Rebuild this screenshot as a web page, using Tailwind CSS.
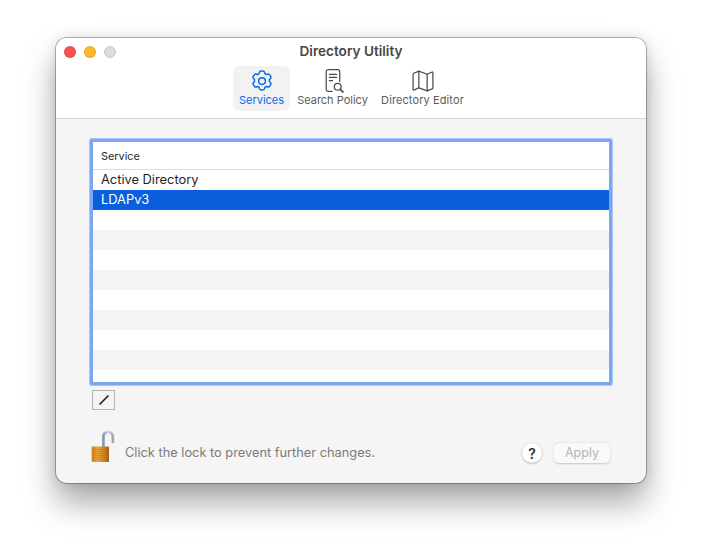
<!DOCTYPE html>
<html><head><meta charset="utf-8"><script src="https://cdn.jsdelivr.net/npm/@tailwindcss/browser@4"></script></head>
<body class="bg-white overflow-hidden font-['Inter','Liberation_Sans',sans-serif]">
<div class="w-[702px] h-[557px] pt-[38px] overflow-hidden">
<div class="mx-auto w-[590px] h-[445px] rounded-[11px] bg-[#f5f5f5] overflow-hidden flex flex-col shadow-[0_0_0_1px_rgba(0,0,0,0.28),0_20px_32px_rgba(0,0,0,0.34),0_0_14px_rgba(0,0,0,0.12)]">
  <header class="relative h-[81px] bg-white border-b border-[#d4d4d4] shrink-0">
    <div class="absolute left-[8px] top-[8px] flex gap-[8px]">
      <span class="w-3 h-3 rounded-full bg-[#fc5053] border border-[#e0443e]/70"></span>
      <span class="w-3 h-3 rounded-full bg-[#fdb82c] border border-[#dea123]/70"></span>
      <span class="w-3 h-3 rounded-full bg-[#dcdcdc] border border-[#c8c8c8]"></span>
    </div>
    <div class="text-center pt-[5px] pb-[1px] text-[13.6px] leading-[16px] font-semibold text-[#474747]">Directory Utility</div>
    <nav class="flex items-start mt-[6px] text-[11px] leading-[14px] pl-[177px]">
      <div class="w-[57px] h-[45px] rounded-md bg-[#f2f2f2] flex flex-col items-center pt-[2px] text-[#0a68ea]">
        <svg class="-my-[1px]" width="28" height="27" viewBox="0 0 24 24" fill="none" stroke="currentColor" stroke-width="1.300" stroke-linecap="round" stroke-linejoin="round"><path d="M9.600 3.600c.1-.9.900-1.600 1.800-1.600h1.200c.9 0 1.700.7 1.800 1.600l.1.800c.5.2 1 .5 1.500.8l.8-.3c.8-.3 1.800 0 2.200.8l.6 1c.5.800.3 1.800-.4 2.400l-.6.500c.1.600.1 1.200 0 1.800l.6.500c.7.600.9 1.600.4 2.400l-.6 1c-.4.800-1.400 1.100-2.200.8l-.8-.3c-.5.300-1 .6-1.500.8l-.1.800c-.1.900-.9 1.600-1.800 1.600h-1.200c-.9 0-1.700-.7-1.800-1.600l-.1-.8c-.5-.2-1-.5-1.500-.8l-.8.300c-.8.300-1.800 0-2.200-.8l-.6-1c-.5-.8-.3-1.800.4-2.400l.6-.5c-.1-.6-.1-1.200 0-1.800l-.6-.5c-.7-.6-.9-1.600-.4-2.400l.6-1c.4-.8 1.400-1.100 2.200-.8l.8.3c.5-.3 1-.6 1.500-.8z" transform="translate(0 1.500)"/><circle cx="12" cy="12.500" r="3"/></svg>
        <span>Services</span>
      </div>
      <div class="w-[85px] h-[45px] flex flex-col items-center pt-[2px] text-[#5c5c5c]">
        <svg width="26" height="25" viewBox="0 0 24 24" fill="none" stroke="#4c4c4c" stroke-width="1.200" stroke-linecap="round" stroke-linejoin="round"><path d="M11 22.500H7.500c-1.100 0-2-.9-2-2V3.500c0-1.100.9-2 2-2h9c1.100 0 2 .9 2 2V13"/><path d="M8.500 6h7M8.500 9h7M8.500 12h3"/><circle cx="16.500" cy="18" r="3.300"/><path d="M19 20.500l2.500 2.500" stroke-width="1.700"/></svg>
        <span>Search Policy</span>
      </div>
      <div class="w-[95px] h-[45px] flex flex-col items-center pt-[2px] text-[#5c5c5c] tracking-[0.1px]">
        <svg width="26" height="25" viewBox="0 0 24 24" fill="none" stroke="#4c4c4c" stroke-width="1.200" stroke-linejoin="round" stroke-linecap="round"><path d="M2.500 6c0-.5.300-.8.700-1L8 3l8 3 4.700-2.200c.4-.2.800.1.800.6v14.600c0 .5-.3.800-.7 1L16 22l-8-3-4.700 2.200c-.4.200-.8-.1-.8-.6z"/><path d="M8 3v16M16 6v16"/></svg>
        <span>Directory Editor</span>
      </div>
    </nav>
  </header>
  <main class="flex-1 px-[34px] pt-[20px] flex flex-col">
    <section class="w-[522px] h-[246px] border-[3px] border-[#7aa7ef] ring-1 ring-[#7aa7ef]/60 rounded-[2px] bg-white flex flex-col">
      <div class="h-[28px] border-b border-[#dcdcdc] pl-[8px] pt-[6px] text-[10.9px] leading-[16px] text-[#2a2a2a] shrink-0">Service</div>
      <ul class="text-[12.85px] leading-[19px] text-[#1f1f1f]">
        <li class="h-5 pl-[8px]">Active Directory</li>
        <li class="h-5 pl-[8px] bg-[#0a5fdc] text-white">LDAPv3</li>
        <li class="h-5"></li>
        <li class="h-5 bg-[#f4f5f5]"></li>
        <li class="h-5"></li>
        <li class="h-5 bg-[#f4f5f5]"></li>
        <li class="h-5"></li>
        <li class="h-5 bg-[#f4f5f5]"></li>
        <li class="h-5"></li>
        <li class="h-5 bg-[#f4f5f5]"></li>
        <li class="h-5"></li>
      </ul>
    </section>
    <div class="ml-[2px] mt-[5px] w-[23px] h-[20px] border border-[#b4b4b4] flex items-center justify-center">
      <svg width="12" height="12" viewBox="0 0 12 12"><path d="M2 10L10 2" stroke="#222" stroke-width="1.700" stroke-linecap="round"/></svg>
    </div>
    <div class="relative mt-[20px] flex items-start h-[40px]">
      <svg width="26" height="34" viewBox="0 0 26 34">
        <defs>
          <linearGradient id="b" x1="0" x2="1" y1="0" y2="0"><stop offset="0" stop-color="#cf8120"/><stop offset=".35" stop-color="#eaa73f"/><stop offset=".8" stop-color="#c67a1c"/><stop offset="1" stop-color="#a05e14"/></linearGradient>
          <linearGradient id="s" x1="0" x2="1" y1="0" y2="0"><stop offset="0" stop-color="#8fa0b4"/><stop offset=".5" stop-color="#eef1f4"/><stop offset="1" stop-color="#a9b2bc"/></linearGradient>
        </defs>
        <path d="M13.500 17V7.500c0-3.200 1.800-5.500 4.500-5.500s4.800 2.300 4.800 5.500V13" fill="none" stroke="url(#s)" stroke-width="3"/>
        <path d="M13.500 17V7.500c0-3.200 1.800-5.500 4.500-5.500s4.800 2.300 4.800 5.500V13" fill="none" stroke="#7f8c9b" stroke-width=".5"/>
        <rect x="1.700" y="16.500" width="17.300" height="15.500" rx="1" fill="url(#b)"/>
        <path d="M1.700 19.500h17.300M1.700 21.500h17.300M1.700 23.500h17.300M1.700 25.500h17.300M1.700 27.500h17.300M1.700 29.500h17.300" stroke="#9a5c16" stroke-opacity=".35" stroke-width=".7"/>
      </svg>
      <span class="ml-[9px] mt-[15px] text-[12.8px] leading-[16px] text-[#7b7b7b]">Click the lock to prevent further changes.</span>
      <div class="absolute left-[432px] top-[13px] w-5 h-5 rounded-full bg-white shadow-[0_0.5px_2px_rgba(0,0,0,0.35)] flex items-center justify-center text-[14px] font-semibold text-[#333]">?</div>
      <div class="absolute left-[464px] top-[13px] w-[56px] h-5 rounded-[5px] bg-[#f9f9f9] shadow-[0_0.5px_2px_rgba(0,0,0,0.2)] flex items-center justify-center text-[12.5px] text-[#b5b5b5]">Apply</div>
    </div>
  </main>
</div>
</div>
</body></html>
